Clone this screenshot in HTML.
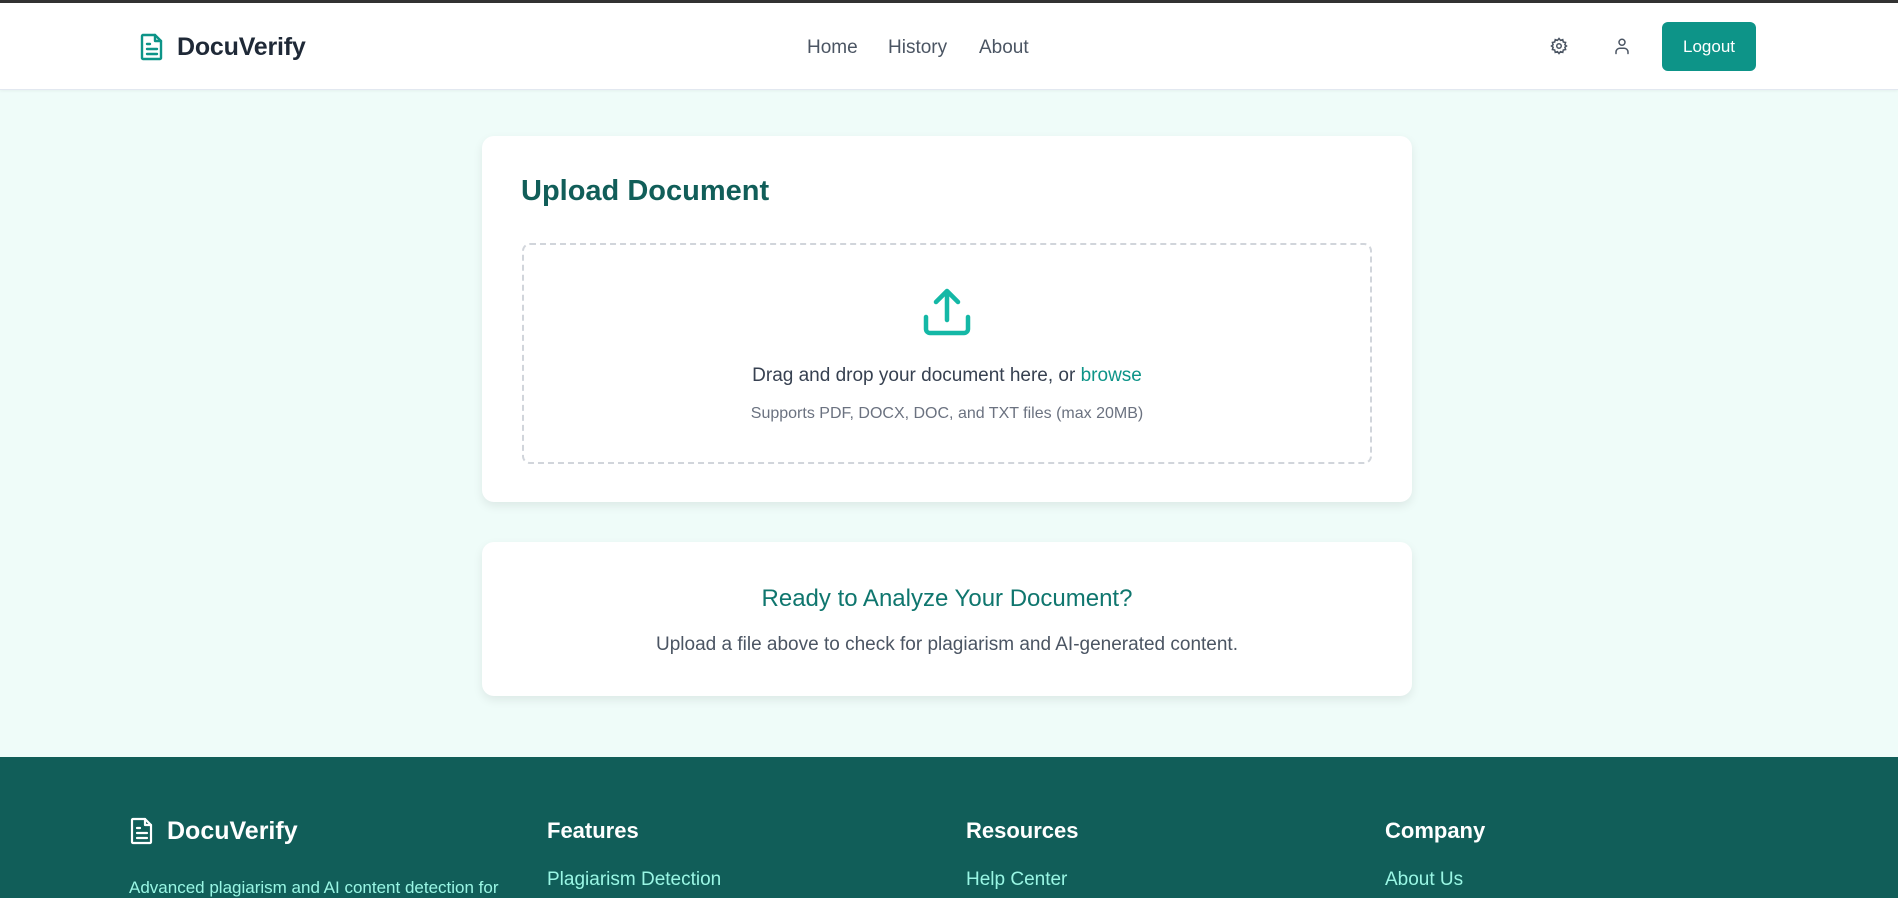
<!DOCTYPE html>
<html><head><meta charset="utf-8"><style>
*{box-sizing:border-box;margin:0;padding:0}
body{width:1898px;height:898px;overflow:hidden;background:#effcf9;font-family:"Liberation Sans",sans-serif;position:relative;color:#1f2937}
.top{position:absolute;left:0;top:0;width:1898px;height:3px;background:#333}
header{position:absolute;left:0;top:3px;width:1898px;height:87px;background:#fff;border-bottom:1px solid #e2e8f0;box-shadow:0 1px 3px rgba(0,0,0,.05)}
.abs{position:absolute}
.nav a{position:absolute;top:34px;font-size:19px;color:#4b5563;text-decoration:none}
.btn{left:1662px;top:19px;width:94px;height:49px;background:#0d9488;border-radius:6px;color:#fff;font-size:17px;text-align:center;line-height:49px}
.card{position:absolute;left:482px;width:930px;background:#fff;border-radius:12px;box-shadow:0 4px 10px rgba(0,0,0,.08)}
footer{position:absolute;left:0;top:757px;width:1898px;height:141px;background:#115e59;color:#fff}
footer h4{position:absolute;top:61px;font-size:22px;font-weight:bold}
footer .l{position:absolute;top:112px;font-size:19px;color:#99f6e4}
</style></head><body>
<div class="top"></div>
<header>
<svg class="abs" style="left:140px;top:30px" width="24" height="28" viewBox="0 0 24 28" fill="none" stroke="#0d9488" stroke-width="2.4" stroke-linejoin="round" stroke-linecap="round"><path d="M3 2h12l6 6v17a1 1 0 0 1-1 1H3a1 1 0 0 1-1-1V3a1 1 0 0 1 1-1z"/><path d="M15 2v6h6M7 11h3M7 16h10M7 21h10"/></svg>
<div class="abs" style="left:177px;top:30px;font-size:25px;font-weight:bold;color:#1f2937;letter-spacing:-0.2px">DocuVerify</div>
<div class="nav"><a style="left:807px">Home</a><a style="left:888px">History</a><a style="left:979px">About</a></div>
<svg class="abs" style="left:1550px;top:34px" width="18" height="18" viewBox="0 0 24 24" fill="none" stroke="#4b5563" stroke-width="2"><circle cx="12" cy="12" r="3"/><path d="M12 2l2 2.5 3-1 .7 3.1 3.1.7-1 3L22 12l-2.2 1.7 1 3-3.1.7-.7 3.1-3-1L12 22l-2-2.5-3 1-.7-3.1-3.1-.7 1-3L2 12l2.2-1.7-1-3 3.1-.7.7-3.1 3 1z"/></svg>
<svg class="abs" style="left:1613px;top:34px" width="18" height="18" viewBox="0 0 24 24" fill="none" stroke="#4b5563" stroke-width="2" stroke-linecap="round"><circle cx="12" cy="7" r="4"/><path d="M4 22v-2a5 5 0 0 1 5-5h6a5 5 0 0 1 5 5v2"/></svg>
<div class="abs btn">Logout</div>
</header>
<div class="card" style="top:136px;height:366px">
<div class="abs" style="left:39px;top:39px;font-size:29px;font-weight:bold;color:#115e59">Upload Document</div>
<div class="abs" style="left:40px;top:107px;width:850px;height:221px;border:2px dashed #d1d5db;border-radius:8px">
<svg class="abs" style="left:397px;top:42px" width="52" height="52" viewBox="0 0 52 52" fill="none" stroke="#14b8a6" stroke-width="4.5" stroke-linecap="round" stroke-linejoin="round"><path d="M26 33V5M15 15L26 4l11 11M5 30v12a4 4 0 0 0 4 4h34a4 4 0 0 0 4-4V30"/></svg>
<div class="abs" style="left:0;width:846px;top:120px;text-align:center;font-size:19px;color:#374151">Drag and drop your document here, or <span style="color:#0d9488">browse</span></div>
<div class="abs" style="left:0;width:846px;top:160px;text-align:center;font-size:16px;color:#6b7280">Supports PDF, DOCX, DOC, and TXT files (max 20MB)</div>
</div>
</div>
<div class="card" style="top:542px;height:154px">
<div class="abs" style="left:0;width:930px;top:43px;text-align:center;font-size:24px;color:#0f766e">Ready to Analyze Your Document?</div>
<div class="abs" style="left:0;width:930px;top:92px;text-align:center;font-size:19px;color:#4b5563">Upload a file above to check for plagiarism and AI-generated content.</div>
</div>
<footer>
<svg class="abs" style="left:130px;top:60px" width="24" height="28" viewBox="0 0 24 28" fill="none" stroke="#fff" stroke-width="2.2" stroke-linejoin="round" stroke-linecap="round"><path d="M3 2h12l6 6v17a1 1 0 0 1-1 1H3a1 1 0 0 1-1-1V3a1 1 0 0 1 1-1z"/><path d="M15 2v6h6M7 11h3M7 16h10M7 21h10"/></svg>
<div class="abs" style="left:167px;top:60px;font-size:25px;font-weight:bold">DocuVerify</div>
<div class="abs" style="left:129px;top:121px;font-size:17px;color:#99f6e4">Advanced plagiarism and AI content detection for</div>
<h4 style="left:547px">Features</h4><h4 style="left:966px">Resources</h4><h4 style="left:1385px">Company</h4>
<div class="l" style="left:547px">Plagiarism Detection</div>
<div class="l" style="left:966px">Help Center</div>
<div class="l" style="left:1385px">About Us</div>
</footer>
</body></html>
